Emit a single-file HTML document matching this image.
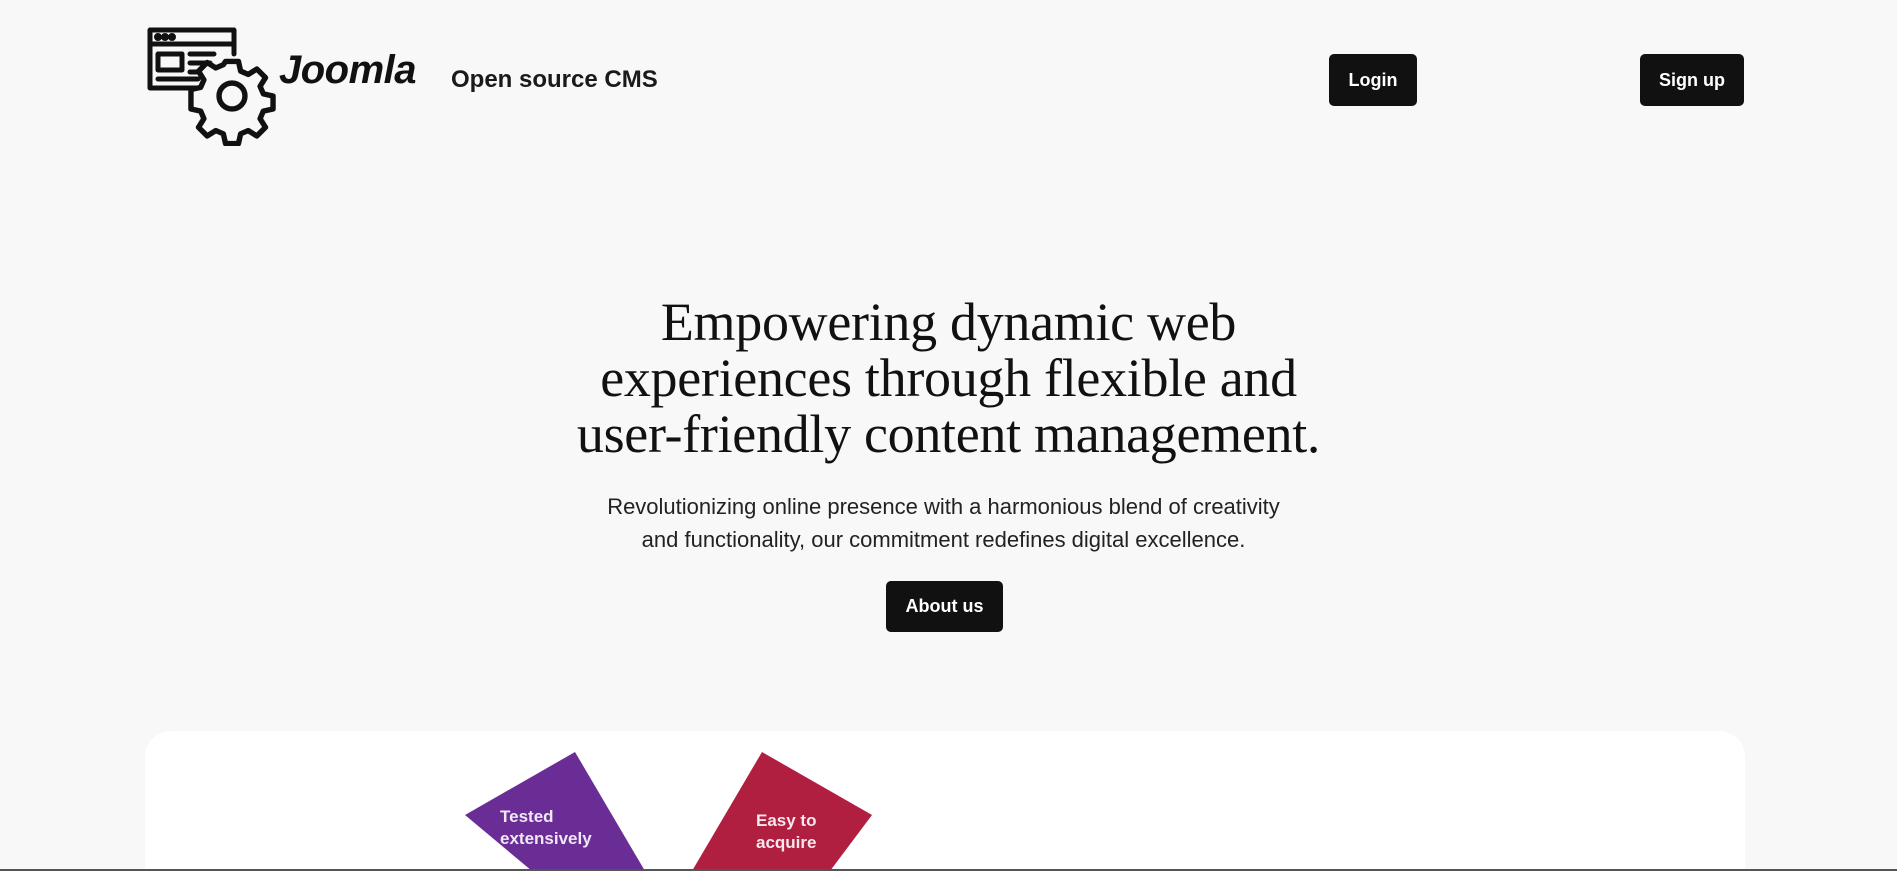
<!DOCTYPE html>
<html><head><meta charset="utf-8"><style>
*{margin:0;padding:0;box-sizing:border-box}
html,body{width:1897px;height:871px;overflow:hidden}
body{background:#f8f8f8;position:relative;font-family:"Liberation Sans",sans-serif;color:#111}
.btn{position:absolute;background:#111;color:#fff;border-radius:5px;font-size:18px;font-weight:bold;display:flex;align-items:center;justify-content:center}
h1{position:absolute;left:0;width:1897px;top:294px;text-align:center;font-family:"Liberation Serif",serif;font-weight:normal;font-size:54px;line-height:56px;letter-spacing:-0.3px;color:#111}
p{position:absolute;left:0;width:1887px;top:490px;text-align:center;font-size:22px;line-height:33px;color:#222}
.card{position:absolute;left:145px;top:731px;width:1600px;height:160px;background:#fff;border-radius:26px}
</style></head><body>
<svg style="position:absolute;left:146px;top:26px" width="140" height="120" viewBox="0 0 140 120" fill="none" stroke="#111" stroke-width="5" stroke-linecap="round" stroke-linejoin="round">
<path d="M60 62H4V4h84v24"/>
<path d="M4 18h84"/>
<circle cx="12" cy="11" r="1.5" fill="#111"/><circle cx="19" cy="11" r="1.5" fill="#111"/><circle cx="26" cy="11" r="1.5" fill="#111"/>
<rect x="12" y="28" width="24" height="16"/>
<path d="M44 28h24M44 37h20M44 46h14M12 53h40M12 62h20"/>
<g transform="translate(86,70) scale(1.08) translate(-84,-74)">
<path fill="#f8f8f8" d="M78 42h12l2 9 7 3 8-5 8 8-5 8 3 7 9 2v12l-9 2-3 7 5 8-8 8-8-5-7 3-2 9H78l-2-9-7-3-8 5-8-8 5-8-3-7-9-2V68l9-2 3-7-5-8 8-8 8 5 7-3z"/>
<circle cx="84" cy="74" r="12"/>
</g>
</svg>
<div style="position:absolute;left:279px;top:48px;font-size:40px;font-weight:bold;font-style:italic;letter-spacing:-0.5px">Joomla</div>
<div style="position:absolute;left:451px;top:66px;font-size:24px;font-weight:bold;color:#1a1a1a">Open source CMS</div>
<div class="btn" style="left:1329px;top:54px;width:88px;height:52px">Login</div>
<div class="btn" style="left:1640px;top:54px;width:104px;height:52px">Sign up</div>
<h1>Empowering dynamic web<br>experiences through flexible and<br>user-friendly content management.</h1>
<p>Revolutionizing online presence with a harmonious blend of creativity<br>and functionality, our commitment redefines digital excellence.</p>
<div class="btn" style="left:886px;top:581px;width:117px;height:51px">About us</div>
<div class="card"></div>
<svg style="position:absolute;left:0;top:0" width="1897" height="871">
<polygon points="575,752 465,815 532,871 645,871" fill="#6a2d96"/>
<polygon points="762,752 872,815 830,871 692,871" fill="#b01e40"/>
<text x="500" y="822" fill="#f0e8f5" font-family="Liberation Sans" font-size="17" font-weight="bold">Tested</text>
<text x="500" y="844" fill="#f0e8f5" font-family="Liberation Sans" font-size="17" font-weight="bold">extensively</text>
<text x="756" y="826" fill="#f8e8ec" font-family="Liberation Sans" font-size="17" font-weight="bold">Easy to</text>
<text x="756" y="848" fill="#f8e8ec" font-family="Liberation Sans" font-size="17" font-weight="bold">acquire</text>
<rect x="0" y="869" width="1897" height="2" fill="#555"/>
</svg>
</body></html>
